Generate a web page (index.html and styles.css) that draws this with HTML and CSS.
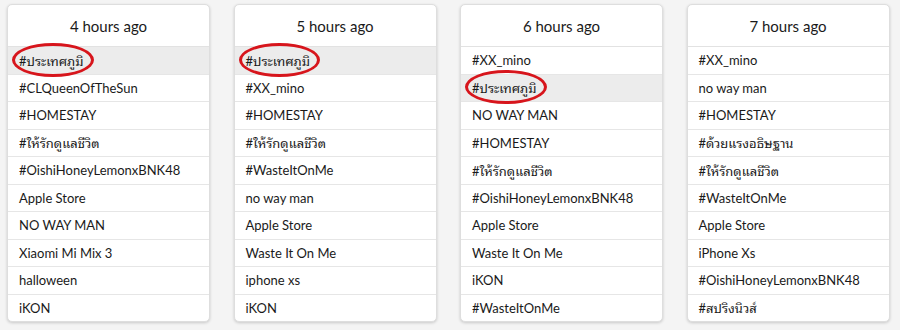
FILE: index.html
```html
<!DOCTYPE html>
<html>
<head>
<meta charset="utf-8">
<link rel="stylesheet" href="styles.css">
</head>
<body>
<div class="board">
  <section class="card">
    <div class="head">4 hours ago</div>
    <ul class="list">
      <li class="row hl"><span class="mark">#ประเทศภูมิ</span></li>
      <li class="row">#CLQueenOfTheSun</li>
      <li class="row">#HOMESTAY</li>
      <li class="row">#ให้รักดูแลชีวิต</li>
      <li class="row">#OishiHoneyLemonxBNK48</li>
      <li class="row">Apple Store</li>
      <li class="row">NO WAY MAN</li>
      <li class="row">Xiaomi Mi Mix 3</li>
      <li class="row">halloween</li>
      <li class="row">iKON</li>
    </ul>
  </section>
  <section class="card">
    <div class="head">5 hours ago</div>
    <ul class="list">
      <li class="row hl"><span class="mark">#ประเทศภูมิ</span></li>
      <li class="row">#XX_mino</li>
      <li class="row">#HOMESTAY</li>
      <li class="row">#ให้รักดูแลชีวิต</li>
      <li class="row">#WasteItOnMe</li>
      <li class="row">no way man</li>
      <li class="row">Apple Store</li>
      <li class="row">Waste It On Me</li>
      <li class="row">iphone xs</li>
      <li class="row">iKON</li>
    </ul>
  </section>
  <section class="card">
    <div class="head">6 hours ago</div>
    <ul class="list">
      <li class="row">#XX_mino</li>
      <li class="row hl"><span class="mark">#ประเทศภูมิ</span></li>
      <li class="row">NO WAY MAN</li>
      <li class="row">#HOMESTAY</li>
      <li class="row">#ให้รักดูแลชีวิต</li>
      <li class="row">#OishiHoneyLemonxBNK48</li>
      <li class="row">Apple Store</li>
      <li class="row">Waste It On Me</li>
      <li class="row">iKON</li>
      <li class="row">#WasteItOnMe</li>
    </ul>
  </section>
  <section class="card">
    <div class="head">7 hours ago</div>
    <ul class="list">
      <li class="row">#XX_mino</li>
      <li class="row">no way man</li>
      <li class="row">#HOMESTAY</li>
      <li class="row">#ด้วยแรงอธิษฐาน</li>
      <li class="row">#ให้รักดูแลชีวิต</li>
      <li class="row">#WasteItOnMe</li>
      <li class="row">Apple Store</li>
      <li class="row">iPhone Xs</li>
      <li class="row">#OishiHoneyLemonxBNK48</li>
      <li class="row">#สปริงนิวส์</li>
    </ul>
  </section>
</div>
</body>
</html>
```
FILE: styles.css
```css
html, body {
  margin: 0;
  padding: 0;
  background: #f4f4f4;
}
body {
  font-family: Lato, "Noto Sans Thai Looped", "Noto Sans Thai", "Noto Sans", sans-serif;
  color: #1a1a1a;
  width: 900px;
  height: 330px;
  overflow: hidden;
}
.board {
  display: grid;
  grid-template-columns: repeat(4, 203px);
  column-gap: 23.5px;
  padding: 4px 0 0 7px;
}
.card {
  background: #fff;
  border: 1px solid #dedede;
  border-radius: 5px;
  box-shadow: 0 1px 3px rgba(0, 0, 0, 0.18);
  overflow: hidden;
}
.head {
  height: 41px;
  display: flex;
  align-items: center;
  justify-content: center;
  font-size: 15px;
  border-bottom: 1px solid #e2e2e2;
}
.list {
  list-style: none;
  margin: 0;
  padding: 0;
}
.row {
  height: 26.5px;
  display: flex;
  align-items: center;
  padding: 0 11px;
  font-size: 13px;
  border-bottom: 1px solid #e6e6e6;
  white-space: nowrap;
}
.row:last-child {
  border-bottom: none;
}
.row.hl {
  background: #ececec;
}
.mark {
  position: relative;
}
.mark::after {
  content: "";
  position: absolute;
  left: -7px;
  right: -10px;
  top: -7px;
  bottom: -6px;
  border: 3px solid #d7151c;
  border-radius: 50%;
}
```
